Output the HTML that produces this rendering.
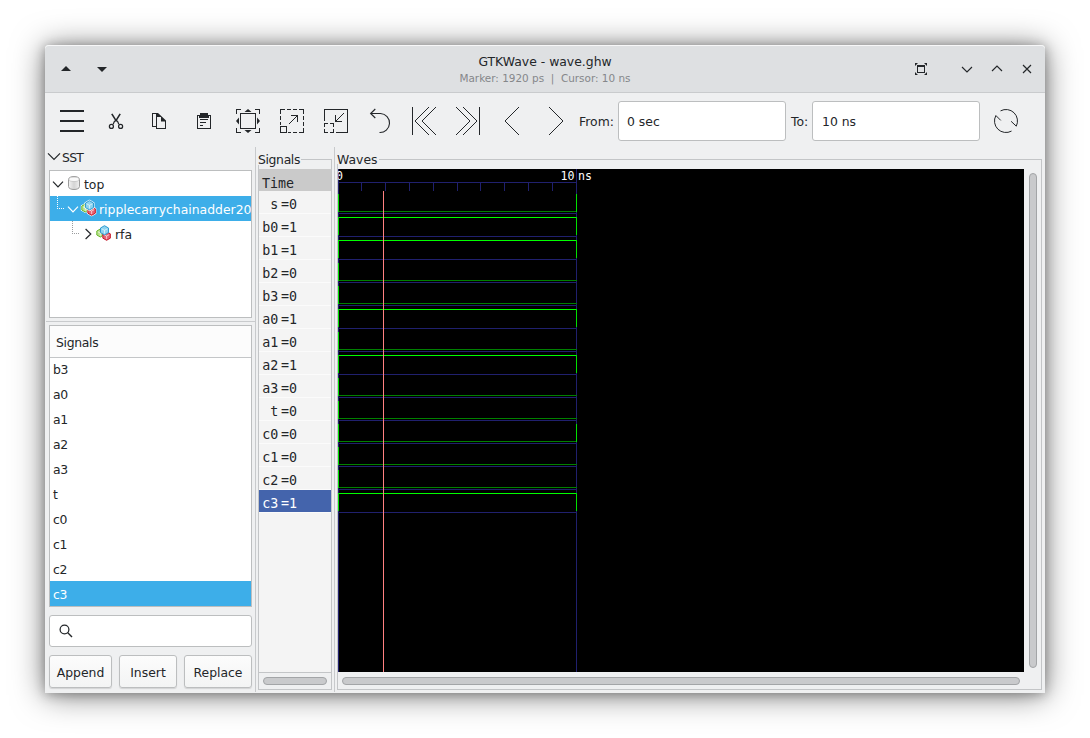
<!DOCTYPE html>
<html><head><meta charset="utf-8"><title>GTKWave - wave.ghw</title>
<style>
html,body{margin:0;padding:0;}
body{width:1090px;height:738px;background:#fff;position:relative;overflow:hidden;font-family:"DejaVu Sans", "Liberation Sans", sans-serif;font-size:12.4px;color:#232629;}
.a{position:absolute;box-sizing:border-box;}
.t{position:absolute;white-space:pre;line-height:16px;height:16px;margin-top:1px;}
.m{font-family:"DejaVu Sans Mono", "Liberation Mono", monospace;font-size:13.33px;}
#win{left:45px;top:45px;width:1000px;height:648px;background:#eff0f1;border-radius:4px 4px 0 0;
 box-shadow:0 1px 12px rgba(0,0,0,.30),0 2px 32px rgba(0,0,0,.52);}
#tb{left:45px;top:45px;width:1000px;height:47px;background:#dee0e2;border-radius:4px 4px 0 0;box-shadow:inset 0 1px 0 rgba(255,255,255,.75);}
.inp{background:#fff;border:1px solid #bcbebf;border-radius:3px;}
.btn{background:linear-gradient(#fcfcfc,#f3f4f4);border:1px solid #bcbebf;border-radius:3px;box-shadow:0 1px 1px rgba(0,0,0,.12);}
.box{background:#fff;border:1px solid #bcbebf;}
.sel{background:#3daee9;}
.sb{background:#c9cacc;border:1px solid #a3a5a7;border-radius:4px;}
svg{position:absolute;left:0;top:0;}
</style></head>
<body>
<div class="a " id="win" style="left:45px;top:45px;width:1000px;height:648px;"></div>
<div class="a " id="tb" style="left:45px;top:45px;width:1000px;height:47px;"></div>
<div class="a " style="left:45px;top:92px;width:1000px;height:1px;background:#c9cbcd"></div>
<div class="t" style="left:45px;width:1000px;text-align:center;top:53px;">GTKWave - wave.ghw</div>
<div class="t" style="left:45px;width:1000px;text-align:center;top:69px;font-size:10.45px;color:#85878a;">Marker: 1920 ps  |  Cursor: 10 ns</div>
<div class="t " style="left:579px;top:113px;">From:</div>
<div class="a inp" style="left:618px;top:101px;width:168px;height:40px;"></div>
<div class="t " style="left:627px;top:113px;">0 sec</div>
<div class="t " style="left:791px;top:113px;">To:</div>
<div class="a inp" style="left:812px;top:101px;width:168px;height:40px;"></div>
<div class="t " style="left:822px;top:113px;">10 ns</div>
<div class="t " style="left:62px;top:149px;letter-spacing:-.7px">SST</div>
<div class="a box" style="left:49px;top:170px;width:203px;height:148px;"></div>
<div class="t " style="left:84px;top:176px;">top</div>
<div class="a sel" style="left:50px;top:196px;width:201px;height:25px;"></div>
<div class="t " style="left:99px;top:201px;color:#fff;width:152px;overflow:hidden;">ripplecarrychainadder20</div>
<div class="t " style="left:115px;top:226px;">rfa</div>
<div class="a " style="left:46px;top:321px;width:209px;height:1px;background:#c9cbcd"></div>
<div class="a box" style="left:49px;top:325px;width:203px;height:282px;"></div>
<div class="a " style="left:50px;top:326px;width:201px;height:31px;background:#fcfcfc"></div>
<div class="a " style="left:50px;top:357px;width:201px;height:1px;background:#c4c6c8"></div>
<div class="t " style="left:56px;top:334px;letter-spacing:-.3px">Signals</div>
<div class="a sel" style="left:50px;top:581px;width:201px;height:25px;"></div>
<div class="t " style="left:53px;top:361px;letter-spacing:-.4px;">b3</div>
<div class="t " style="left:53px;top:386px;letter-spacing:-.4px;">a0</div>
<div class="t " style="left:53px;top:411px;letter-spacing:-.4px;">a1</div>
<div class="t " style="left:53px;top:436px;letter-spacing:-.4px;">a2</div>
<div class="t " style="left:53px;top:461px;letter-spacing:-.4px;">a3</div>
<div class="t " style="left:53px;top:486px;letter-spacing:-.4px;">t</div>
<div class="t " style="left:53px;top:511px;letter-spacing:-.4px;">c0</div>
<div class="t " style="left:53px;top:536px;letter-spacing:-.4px;">c1</div>
<div class="t " style="left:53px;top:561px;letter-spacing:-.4px;">c2</div>
<div class="t " style="left:53px;top:586px;letter-spacing:-.4px;color:#fff;">c3</div>
<div class="a inp" style="left:49px;top:615px;width:203px;height:32px;"></div>
<div class="a btn" style="left:49px;top:655px;width:63px;height:33px;"></div>
<div class="a btn" style="left:119px;top:655px;width:58px;height:33px;"></div>
<div class="a btn" style="left:184px;top:655px;width:68px;height:33px;"></div>
<div class="t" style="left:49px;width:63px;text-align:center;top:664px;">Append</div>
<div class="t" style="left:119px;width:58px;text-align:center;top:664px;">Insert</div>
<div class="t" style="left:184px;width:68px;text-align:center;top:664px;">Replace</div>
<div class="a " style="left:255px;top:147px;width:1px;height:545px;background:#c8cacc"></div>
<div class="a " style="left:334px;top:147px;width:1px;height:545px;background:#c8cacc"></div>
<div class="a " style="left:258px;top:159px;width:74px;height:531px;border:1px solid #c3c5c7;"></div>
<div class="a " style="left:256px;top:152px;width:45px;height:13px;background:#eff0f1"></div>
<div class="t " style="left:258px;top:151px;letter-spacing:-.35px">Signals</div>
<div class="a " style="left:259px;top:169px;width:72px;height:503px;background:#f4f4f4"></div>
<div class="a " style="left:259px;top:169px;width:72px;height:22px;background:#cacaca"></div>
<div class="a " style="left:259px;top:672px;width:72px;height:1px;background:#c3c5c7"></div>
<div class="a sb" style="left:263px;top:677px;width:64px;height:8px;"></div>
<div class="t m" style="left:262px;top:175px;">Time</div>
<div class="a " style="left:259px;top:213px;width:72px;height:1px;background:#fbfbfb"></div>
<div class="t m" style="left:248px;width:30.2px;text-align:right;top:196px;">s</div>
<div class="t m" style="left:281px;top:196px;">=0</div>
<div class="a " style="left:259px;top:236px;width:72px;height:1px;background:#fbfbfb"></div>
<div class="t m" style="left:248px;width:30.2px;text-align:right;top:219px;">b0</div>
<div class="t m" style="left:281px;top:219px;">=1</div>
<div class="a " style="left:259px;top:259px;width:72px;height:1px;background:#fbfbfb"></div>
<div class="t m" style="left:248px;width:30.2px;text-align:right;top:242px;">b1</div>
<div class="t m" style="left:281px;top:242px;">=1</div>
<div class="a " style="left:259px;top:282px;width:72px;height:1px;background:#fbfbfb"></div>
<div class="t m" style="left:248px;width:30.2px;text-align:right;top:265px;">b2</div>
<div class="t m" style="left:281px;top:265px;">=0</div>
<div class="a " style="left:259px;top:305px;width:72px;height:1px;background:#fbfbfb"></div>
<div class="t m" style="left:248px;width:30.2px;text-align:right;top:288px;">b3</div>
<div class="t m" style="left:281px;top:288px;">=0</div>
<div class="a " style="left:259px;top:328px;width:72px;height:1px;background:#fbfbfb"></div>
<div class="t m" style="left:248px;width:30.2px;text-align:right;top:311px;">a0</div>
<div class="t m" style="left:281px;top:311px;">=1</div>
<div class="a " style="left:259px;top:351px;width:72px;height:1px;background:#fbfbfb"></div>
<div class="t m" style="left:248px;width:30.2px;text-align:right;top:334px;">a1</div>
<div class="t m" style="left:281px;top:334px;">=0</div>
<div class="a " style="left:259px;top:374px;width:72px;height:1px;background:#fbfbfb"></div>
<div class="t m" style="left:248px;width:30.2px;text-align:right;top:357px;">a2</div>
<div class="t m" style="left:281px;top:357px;">=1</div>
<div class="a " style="left:259px;top:397px;width:72px;height:1px;background:#fbfbfb"></div>
<div class="t m" style="left:248px;width:30.2px;text-align:right;top:380px;">a3</div>
<div class="t m" style="left:281px;top:380px;">=0</div>
<div class="a " style="left:259px;top:420px;width:72px;height:1px;background:#fbfbfb"></div>
<div class="t m" style="left:248px;width:30.2px;text-align:right;top:403px;">t</div>
<div class="t m" style="left:281px;top:403px;">=0</div>
<div class="a " style="left:259px;top:443px;width:72px;height:1px;background:#fbfbfb"></div>
<div class="t m" style="left:248px;width:30.2px;text-align:right;top:426px;">c0</div>
<div class="t m" style="left:281px;top:426px;">=0</div>
<div class="a " style="left:259px;top:466px;width:72px;height:1px;background:#fbfbfb"></div>
<div class="t m" style="left:248px;width:30.2px;text-align:right;top:449px;">c1</div>
<div class="t m" style="left:281px;top:449px;">=0</div>
<div class="a " style="left:259px;top:489px;width:72px;height:1px;background:#fbfbfb"></div>
<div class="t m" style="left:248px;width:30.2px;text-align:right;top:472px;">c2</div>
<div class="t m" style="left:281px;top:472px;">=0</div>
<div class="a " style="left:259px;top:490px;width:72px;height:22px;background:#4464ac"></div>
<div class="a " style="left:259px;top:512px;width:72px;height:1px;background:#fbfbfb"></div>
<div class="t m" style="left:248px;width:30.2px;text-align:right;top:495px;color:#fff;">c3</div>
<div class="t m" style="left:281px;top:495px;color:#fff;">=1</div>
<div class="a " style="left:337px;top:159px;width:705px;height:531px;border:1px solid #c3c5c7;"></div>
<div class="a " style="left:335px;top:152px;width:44px;height:12px;background:#eff0f1"></div>
<div class="t " style="left:337px;top:151px;">Waves</div>
<div class="a " style="left:338px;top:169px;width:686px;height:503px;background:#000"></div>
<div class="a sb" style="left:342px;top:677px;width:678px;height:8px;"></div>
<div class="a sb" style="left:1029px;top:173px;width:8px;height:495px;"></div>
<svg width="1090" height="738" viewBox="0 0 1090 738">
<g shape-rendering="crispEdges">
<rect x="338" y="169" width="1" height="503" fill="#20206e"/>
<rect x="576" y="169" width="1" height="503" fill="#20206e"/>
<rect x="338" y="182" width="239" height="1" fill="#20206e"/>
<rect x="361" y="182" width="1" height="9" fill="#20206e"/>
<rect x="385" y="182" width="1" height="9" fill="#20206e"/>
<rect x="409" y="182" width="1" height="9" fill="#20206e"/>
<rect x="433" y="182" width="1" height="9" fill="#20206e"/>
<rect x="457" y="182" width="1" height="9" fill="#20206e"/>
<rect x="480" y="182" width="1" height="9" fill="#20206e"/>
<rect x="504" y="182" width="1" height="9" fill="#20206e"/>
<rect x="528" y="182" width="1" height="9" fill="#20206e"/>
<rect x="552" y="182" width="1" height="9" fill="#20206e"/>
<rect x="338" y="213" width="239" height="1" fill="#20206e"/>
<rect x="338" y="211" width="239" height="1" fill="#008000"/>
<rect x="338" y="194" width="1" height="18" fill="#00e000"/>
<rect x="576" y="194" width="1" height="18" fill="#00e000"/>
<rect x="338" y="236" width="239" height="1" fill="#20206e"/>
<rect x="338" y="217" width="239" height="1" fill="#00ff00"/>
<rect x="338" y="217" width="1" height="18" fill="#00e000"/>
<rect x="576" y="217" width="1" height="18" fill="#00e000"/>
<rect x="338" y="259" width="239" height="1" fill="#20206e"/>
<rect x="338" y="240" width="239" height="1" fill="#00ff00"/>
<rect x="338" y="240" width="1" height="18" fill="#00e000"/>
<rect x="576" y="240" width="1" height="18" fill="#00e000"/>
<rect x="338" y="282" width="239" height="1" fill="#20206e"/>
<rect x="338" y="280" width="239" height="1" fill="#008000"/>
<rect x="338" y="263" width="1" height="18" fill="#00e000"/>
<rect x="338" y="305" width="239" height="1" fill="#20206e"/>
<rect x="338" y="303" width="239" height="1" fill="#008000"/>
<rect x="338" y="286" width="1" height="18" fill="#00e000"/>
<rect x="338" y="328" width="239" height="1" fill="#20206e"/>
<rect x="338" y="309" width="239" height="1" fill="#00ff00"/>
<rect x="338" y="309" width="1" height="18" fill="#00e000"/>
<rect x="576" y="309" width="1" height="18" fill="#00e000"/>
<rect x="338" y="351" width="239" height="1" fill="#20206e"/>
<rect x="338" y="349" width="239" height="1" fill="#008000"/>
<rect x="338" y="332" width="1" height="18" fill="#00e000"/>
<rect x="338" y="374" width="239" height="1" fill="#20206e"/>
<rect x="338" y="355" width="239" height="1" fill="#00ff00"/>
<rect x="338" y="355" width="1" height="18" fill="#00e000"/>
<rect x="576" y="355" width="1" height="18" fill="#00e000"/>
<rect x="338" y="397" width="239" height="1" fill="#20206e"/>
<rect x="338" y="395" width="239" height="1" fill="#008000"/>
<rect x="338" y="378" width="1" height="18" fill="#00e000"/>
<rect x="338" y="420" width="239" height="1" fill="#20206e"/>
<rect x="338" y="418" width="239" height="1" fill="#008000"/>
<rect x="338" y="401" width="1" height="18" fill="#00e000"/>
<rect x="338" y="443" width="239" height="1" fill="#20206e"/>
<rect x="338" y="441" width="239" height="1" fill="#008000"/>
<rect x="338" y="424" width="1" height="18" fill="#00e000"/>
<rect x="576" y="424" width="1" height="18" fill="#00e000"/>
<rect x="338" y="466" width="239" height="1" fill="#20206e"/>
<rect x="338" y="464" width="239" height="1" fill="#008000"/>
<rect x="338" y="447" width="1" height="18" fill="#00e000"/>
<rect x="338" y="489" width="239" height="1" fill="#20206e"/>
<rect x="338" y="487" width="239" height="1" fill="#008000"/>
<rect x="338" y="470" width="1" height="18" fill="#00e000"/>
<rect x="338" y="512" width="239" height="1" fill="#20206e"/>
<rect x="338" y="493" width="239" height="1" fill="#00ff00"/>
<rect x="338" y="493" width="1" height="18" fill="#00e000"/>
<rect x="576" y="493" width="1" height="18" fill="#00e000"/>
<rect x="383" y="191" width="1" height="481" fill="#ff8080"/>
</g>
<defs><clipPath id="wc"><rect x="338" y="169" width="686" height="503"/></clipPath></defs>
<g clip-path="url(#wc)" style="font-family:'DejaVu Sans Mono', 'Liberation Mono', monospace;font-size:11.6px" fill="#fff">
<text x="336" y="180">0</text>
<text x="560.6" y="180">10</text>
<text x="578" y="180">ns</text></g>
<path d="M61 71 L66 66 L71 71 Z" fill="#232629" />
<path d="M97 67 L107 67 L102 72 Z" fill="#232629" />
<rect x="917.5" y="66.5" width="7" height="6" fill="none" stroke="#232629"/><rect x="917" y="65" width="8" height="2" fill="#232629"/>
<path d="M915 63 L918 63 L915 66 Z M927 63 L927 66 L924 63 Z M915 75 L915 72 L918 75 Z M927 75 L924 75 L927 72 Z" fill="#232629" />
<path d="M962 67 L967 72 L972 67" fill="none" stroke="#232629" stroke-width="1.15"/>
<path d="M992 71 L997 66 L1002 71" fill="none" stroke="#232629" stroke-width="1.15"/>
<path d="M1023 65 L1031 73 M1031 65 L1023 73" fill="none" stroke="#232629" stroke-width="1.15"/>
<g shape-rendering="crispEdges" fill="#232629"><rect x="60" y="110" width="24" height="2"/><rect x="60" y="120" width="24" height="2"/><rect x="60" y="130" width="24" height="2"/></g>
<path d="M111.8 113.9 L116 120.6 L120.2 113.9" fill="none" stroke="#232629" stroke-width="1.6" stroke-linejoin="miter"/>
<path d="M116 120.2 C117.6 121 118.3 122.4 118.9 124.4 M116 120.2 C114.4 121 113.7 122.4 113.1 124.4" fill="none" stroke="#232629" stroke-width="1.3"/>
<circle cx="111.4" cy="126.4" r="2" fill="none" stroke="#232629" stroke-width="1.25"/><circle cx="120.6" cy="126.4" r="2" fill="none" stroke="#232629" stroke-width="1.25"/>
<g shape-rendering="crispEdges">
<path d="M156.5 126.5 L152.5 126.5 L152.5 113.5 L157.5 113.5" fill="none" stroke="#232629" stroke-width="1" />
<path d="M156.5 113.5 L156.5 128.5 L165.5 128.5 L165.5 121" fill="none" stroke="#232629" stroke-width="1" />
</g>
<path d="M156 113 L158 113 L166 120.5 L166 121.5 L161 121.5 L161 117 L156 117 Z" fill="#232629" />
<g shape-rendering="crispEdges">
<path d="M197.5 115.5 L210.5 115.5 L210.5 128.5 L197.5 128.5 Z" fill="none" stroke="#232629" stroke-width="1" />
<rect x="200" y="113" width="8" height="3" fill="#232629"/><rect x="199" y="115" width="10" height="3" fill="#232629"/>
<rect x="200" y="119" width="8" height="1" fill="#232629"/><rect x="200" y="122" width="6" height="1" fill="#232629"/><rect x="200" y="125" width="3" height="1" fill="#232629"/>
</g>
<g shape-rendering="crispEdges">
<path d="M236.5 114 L236.5 109.5 L241 109.5 M255 109.5 L259.5 109.5 L259.5 114 M259.5 128 L259.5 132.5 L255 132.5 M241 132.5 L236.5 132.5 L236.5 128" fill="none" stroke="#232629" stroke-width="1" />
<path d="M240.5 113.5 H255.5 V128.5 H240.5 Z" fill="none" stroke="#232629" stroke-width="1" />
</g>
<path d="M248 109 L251.5 112 L244.5 112 Z M248 133 L244.5 130 L251.5 130 Z M236 121 L239 117.5 L239 124.5 Z M260 121 L257 124.5 L257 117.5 Z" fill="#232629" />
<g shape-rendering="crispEdges">
<path d="M280.5 114 V109.5 H285 M287 109.5 H291 M293 109.5 H297 M299 109.5 H303.5 V114 M303.5 116 V120 M303.5 122 V126 M303.5 128 V132.5 H299 M297 132.5 H293 M291 132.5 H288 M280.5 116 V120 M280.5 122 V125" fill="none" stroke="#232629" stroke-width="1" />
<path d="M280.5 126.5 H286.5 V132.5 H280.5 Z" fill="none" stroke="#232629" stroke-width="1" />
<path d="M291 115.5 H297.5 V122" fill="none" stroke="#232629" stroke-width="1" />
</g>
<path d="M289 124 L297.5 115.5" fill="none" stroke="#232629" stroke-width="1" />
<g shape-rendering="crispEdges">
<path d="M324.5 121 V109.5 H347.5 V132.5 H336" fill="none" stroke="#232629" stroke-width="1" />
<path d="M324.5 127 V123.5 H328 M330 123.5 H333.5 V127 M333.5 129 V132.5 H330 M328 132.5 H324.5 V129" fill="none" stroke="#232629" stroke-width="1" />
<path d="M335.5 115 V121.5 H342" fill="none" stroke="#232629" stroke-width="1" />
</g>
<path d="M344 113 L335.5 121.5" fill="none" stroke="#232629" stroke-width="1" />
<path d="M375.3 109 L370.6 113.5 L375.3 118 M370.6 113.5 H380.5 A9.5 9.5 0 0 1 379.5 132.5" fill="none" stroke="#232629" stroke-width="1.1"/>
<rect x="412" y="107" width="1" height="28" fill="#232629" shape-rendering="crispEdges"/>
<path d="M429 107 L415 121 L429 135 M436 107 L422 121 L436 135" fill="none" stroke="#232629" stroke-width="1" />
<rect x="479" y="107" width="1" height="28" fill="#232629" shape-rendering="crispEdges"/>
<path d="M456 107 L470 121 L456 135 M463 107 L477 121 L463 135" fill="none" stroke="#232629" stroke-width="1" />
<path d="M519 107 L505 121 L519 135" fill="none" stroke="#232629" stroke-width="1" />
<path d="M549 107 L563 121 L549 135" fill="none" stroke="#232629" stroke-width="1" />
<path d="M1000.53 110.88 A11.5 11.5 0 0 1 1016.27 126.17 L1011.1 121.3 M1011.54 131.08 A11.5 11.5 0 0 1 995.88 115.53 L1000.75 120.4" fill="none" stroke="#232629" stroke-width="1" />
<path d="M48 153.3 L54 159.3 L60 153.3" fill="none" stroke="#232629" stroke-width="1.2"/>
<path d="M53 181.6 L58 186.8 L63 181.6" fill="none" stroke="#232629" stroke-width="1.2"/>
<path d="M68 206.6 L73 211.8 L78 206.6" fill="none" stroke="#fff" stroke-width="1.2"/>
<path d="M85.6 229 L90.8 234 L85.6 239" fill="none" stroke="#232629" stroke-width="1.2"/>
<g shape-rendering="crispEdges"><path d="M57.5 196 V208.5 H64" fill="none" stroke="#fff" stroke-dasharray="1 1"/><path d="M72.5 221 V233.5 H79" fill="none" stroke="#9a9c9e" stroke-dasharray="1 1"/></g>
<defs><linearGradient id="cy" x1="0" x2="1"><stop offset="0" stop-color="#f4f4f4"/><stop offset=".5" stop-color="#d4d4d4"/><stop offset="1" stop-color="#f0f0f0"/></linearGradient></defs>
<path d="M68.5 179.5 C68.5 175.5 79.5 175.5 79.5 179.5 V186.5 C79.5 190.5 68.5 190.5 68.5 186.5 Z" fill="url(#cy)" stroke="#9b9b9b"/><ellipse cx="74" cy="179.3" rx="5" ry="2.2" fill="#fafafa" stroke="#b5b5b5" stroke-width=".6"/>
<polygon points="85.3,204.0 88.78,206.0 88.78,210.0 85.3,212.0 81.82,210.0 81.82,206.0" fill="#fff" stroke="#fff" stroke-width="2" stroke-linejoin="round"/>
<polygon points="85.3,204.0 88.78,206.0 88.78,210.0 85.3,212.0 81.82,210.0 81.82,206.0" fill="#b8e08a" stroke="#6ab82e" stroke-width="1" stroke-linejoin="round"/>
<path d="M82.89999999999999 206.8 L85.3 208 L87.7 206.8 M85.3 208 V210.8" stroke="#fff" stroke-opacity=".75" fill="none" stroke-width=".8"/>
<polygon points="91.6,206.7 95.341,208.85 95.341,213.15 91.6,215.3 87.859,213.15 87.859,208.85" fill="#fff" stroke="#fff" stroke-width="2" stroke-linejoin="round"/>
<polygon points="91.6,206.7 95.341,208.85 95.341,213.15 91.6,215.3 87.859,213.15 87.859,208.85" fill="#e86272" stroke="#c41a2a" stroke-width="1" stroke-linejoin="round"/>
<path d="M89.02 209.71 L91.6 211 L94.17999999999999 209.71 M91.6 211 V214.01" stroke="#fff" stroke-opacity=".75" fill="none" stroke-width=".8"/>
<polygon points="89.5,200.70000000000002 93.502,203.0 93.502,207.60000000000002 89.5,209.9 85.498,207.60000000000002 85.498,203.0" fill="#fff" stroke="#fff" stroke-width="2" stroke-linejoin="round"/>
<polygon points="89.5,200.70000000000002 93.502,203.0 93.502,207.60000000000002 89.5,209.9 85.498,207.60000000000002 85.498,203.0" fill="#8dd3f0" stroke="#2f9bd0" stroke-width="1" stroke-linejoin="round"/>
<path d="M86.74 203.92000000000002 L89.5 205.3 L92.26 203.92000000000002 M89.5 205.3 V208.52" stroke="#fff" stroke-opacity=".75" fill="none" stroke-width=".8"/>
<polygon points="100.3,229.0 103.78,231.0 103.78,235.0 100.3,237.0 96.82,235.0 96.82,231.0" fill="#b8e08a" stroke="#6ab82e" stroke-width="1" stroke-linejoin="round"/>
<path d="M97.89999999999999 231.8 L100.3 233 L102.7 231.8 M100.3 233 V235.8" stroke="#fff" stroke-opacity=".75" fill="none" stroke-width=".8"/>
<polygon points="106.6,231.7 110.341,233.85 110.341,238.15 106.6,240.3 102.859,238.15 102.859,233.85" fill="#e86272" stroke="#c41a2a" stroke-width="1" stroke-linejoin="round"/>
<path d="M104.02 234.71 L106.6 236 L109.17999999999999 234.71 M106.6 236 V239.01" stroke="#fff" stroke-opacity=".75" fill="none" stroke-width=".8"/>
<polygon points="104.5,225.70000000000002 108.502,228.0 108.502,232.60000000000002 104.5,234.9 100.498,232.60000000000002 100.498,228.0" fill="#8dd3f0" stroke="#2f9bd0" stroke-width="1" stroke-linejoin="round"/>
<path d="M101.74 228.92000000000002 L104.5 230.3 L107.26 228.92000000000002 M104.5 230.3 V233.52" stroke="#fff" stroke-opacity=".75" fill="none" stroke-width=".8"/>
<circle cx="64.5" cy="629.5" r="4.4" fill="none" stroke="#232629" stroke-width="1.25"/>
<path d="M67.8 632.8 L72 637" fill="none" stroke="#232629" stroke-width="1.35"/>
</svg>
</body></html>
